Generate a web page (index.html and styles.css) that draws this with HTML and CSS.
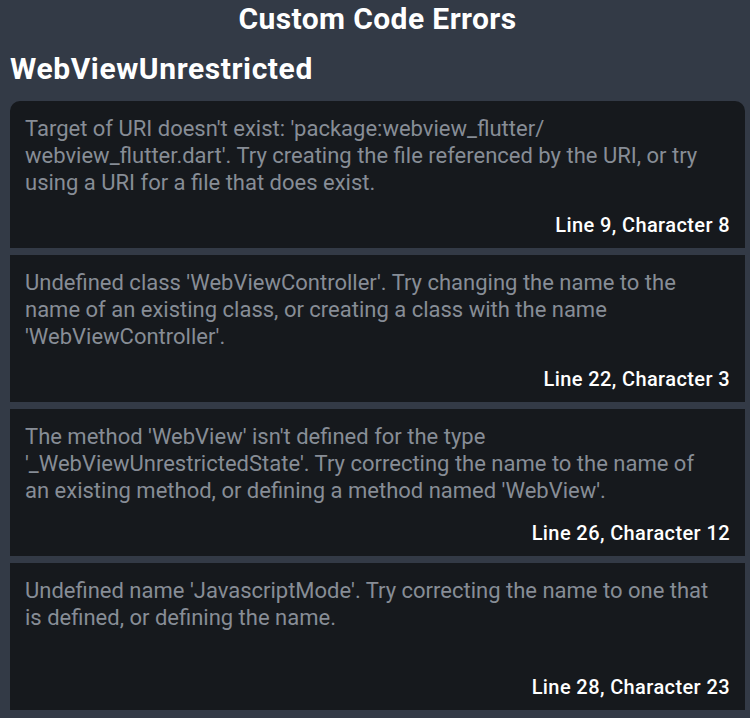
FILE: index.html
```html
<!DOCTYPE html>
<html>
<head>
<meta charset="utf-8">
<link rel="stylesheet" href="styles.css">
</head>
<body>
<div class="page">
  <h1 class="title">Custom Code Errors</h1>
  <h2 class="section">WebViewUnrestricted</h2>
  <div class="list">
    <div class="card">
      <p class="msg">Target of URI doesn't exist: 'package:webview_flutter/<br>webview_flutter.dart'. Try creating the file referenced by the URI, or try<br>using a URI for a file that does exist.</p>
      <div class="loc">Line 9, Character 8</div>
    </div>
    <div class="card">
      <p class="msg">Undefined class 'WebViewController'. Try changing the name to the<br>name of an existing class, or creating a class with the name<br>'WebViewController'.</p>
      <div class="loc">Line 22, Character 3</div>
    </div>
    <div class="card">
      <p class="msg">The method 'WebView' isn't defined for the type<br>'_WebViewUnrestrictedState'. Try correcting the name to the name of<br>an existing method, or defining a method named 'WebView'.</p>
      <div class="loc">Line 26, Character 12</div>
    </div>
    <div class="card">
      <p class="msg">Undefined name 'JavascriptMode'. Try correcting the name to one that<br>is defined, or defining the name.</p>
      <div class="loc">Line 28, Character 23</div>
    </div>
  </div>
</div>
</body>
</html>
```
FILE: styles.css
```css
html, body {
  margin: 0;
  padding: 0;
  background: #333a46;
}
.page {
  width: 750px;
  height: 718px;
  overflow: hidden;
  font-family: Roboto, "Noto Sans", sans-serif;
  box-sizing: border-box;
  padding: 0 5px 0 10px;
}
.title {
  margin: 0;
  height: 37px;
  line-height: 37px;
  text-align: center;
  color: #ffffff;
  font-size: 30px;
  font-weight: 700;
  letter-spacing: 0.4px;
}
.section {
  margin: 0;
  height: 64px;
  line-height: 64px;
  color: #ffffff;
  font-size: 30px;
  font-weight: 700;
  letter-spacing: 0.6px;
}
.list {
  display: flex;
  flex-direction: column;
  gap: 7px;
  border-radius: 10px 10px 0 0;
  overflow: hidden;
}
.card {
  background: #16191d;
  height: 147px;
  box-sizing: border-box;
  padding: 14px 15px 10px 15px;
  display: flex;
  flex-direction: column;
  justify-content: space-between;
}
.msg {
  margin: 0;
  color: #878d96;
  font-size: 22px;
  line-height: 27px;
  white-space: nowrap;
}
.loc {
  text-align: right;
  color: #ffffff;
  font-size: 20px;
  font-weight: 500;
  line-height: 26px;
  letter-spacing: 0.4px;
}
```
